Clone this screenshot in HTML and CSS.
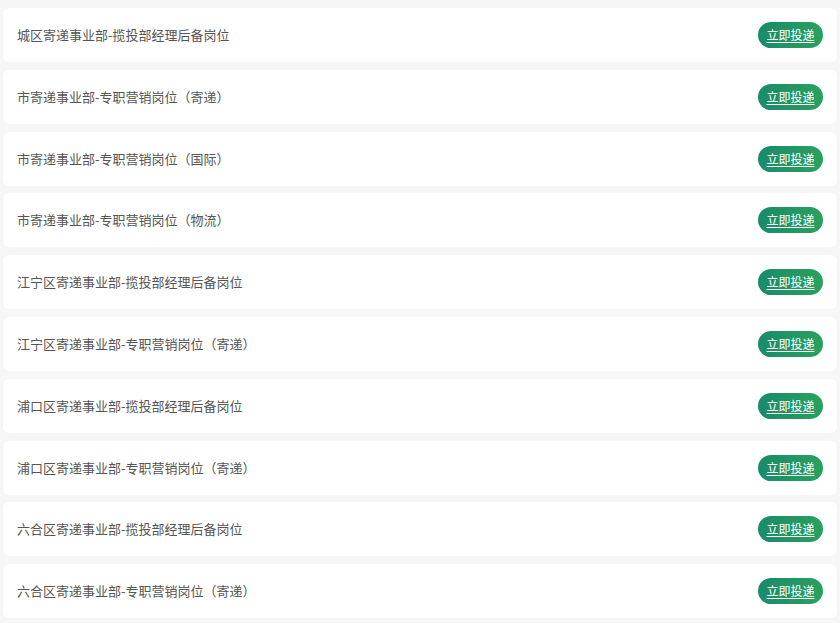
FILE: index.html
```html
<!DOCTYPE html>
<html lang="zh">
<head>
<meta charset="utf-8">
<link rel="stylesheet" href="styles.css">
</head>
<body>
<ul class="job-list">
  <li class="job"><span class="job-title">城区寄递事业部-揽投部经理后备岗位</span><a class="apply" href="#">立即投递</a></li>
  <li class="job"><span class="job-title">市寄递事业部-专职营销岗位（寄递）</span><a class="apply" href="#">立即投递</a></li>
  <li class="job"><span class="job-title">市寄递事业部-专职营销岗位（国际）</span><a class="apply" href="#">立即投递</a></li>
  <li class="job"><span class="job-title">市寄递事业部-专职营销岗位（物流）</span><a class="apply" href="#">立即投递</a></li>
  <li class="job"><span class="job-title">江宁区寄递事业部-揽投部经理后备岗位</span><a class="apply" href="#">立即投递</a></li>
  <li class="job"><span class="job-title">江宁区寄递事业部-专职营销岗位（寄递）</span><a class="apply" href="#">立即投递</a></li>
  <li class="job"><span class="job-title">浦口区寄递事业部-揽投部经理后备岗位</span><a class="apply" href="#">立即投递</a></li>
  <li class="job"><span class="job-title">浦口区寄递事业部-专职营销岗位（寄递）</span><a class="apply" href="#">立即投递</a></li>
  <li class="job"><span class="job-title">六合区寄递事业部-揽投部经理后备岗位</span><a class="apply" href="#">立即投递</a></li>
  <li class="job"><span class="job-title">六合区寄递事业部-专职营销岗位（寄递）</span><a class="apply" href="#">立即投递</a></li>
</ul>
</body>
</html>
```

FILE: styles.css
```css
html, body {
  margin: 0;
  padding: 0;
  background: #f6f6f6;
  font-family: "Noto Sans CJK SC", "Noto Sans", sans-serif;
}

.job-list {
  list-style: none;
  margin: 0;
  padding: 8px 3px 0 3px;
  display: flex;
  flex-direction: column;
  gap: 7.8px;
}

.job {
  height: 54px;
  background: #ffffff;
  border-radius: 6px;
  display: flex;
  align-items: center;
  justify-content: space-between;
  padding: 0 14px 0 14px;
  box-sizing: border-box;
}

.job-title {
  font-size: 13px;
  color: #555555;
  line-height: 20px;
}

.apply {
  height: 26px;
  width: 65px;
  border-radius: 13px;
  background: linear-gradient(90deg, #1a8a6c 0%, #29a25c 100%);
  color: #ffffff;
  font-size: 12px;
  line-height: 26px;
  text-align: center;
  text-decoration: underline;
  text-decoration-thickness: 1px;
  text-underline-offset: 2px;
}
```
